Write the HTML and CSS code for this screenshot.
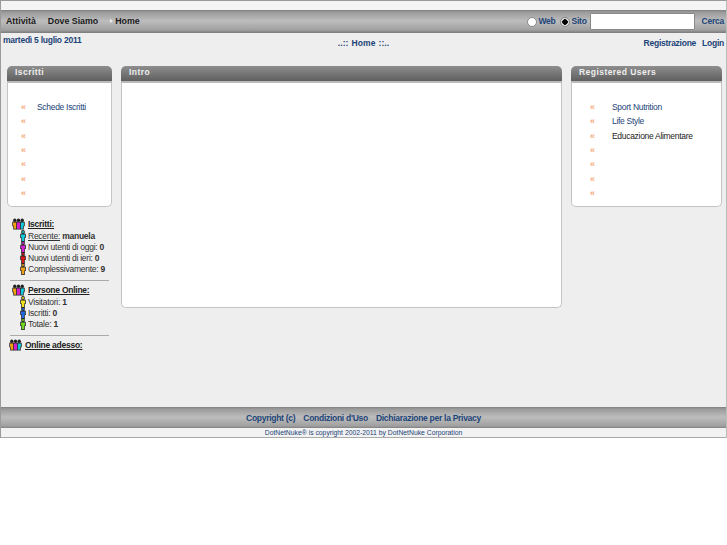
FILE: index.html
```html
<!DOCTYPE html>
<html lang="it">
<head>
<meta charset="utf-8">
<title>Home</title>
<link rel="stylesheet" href="styles.css">
</head>
<body>
<svg class="defs" width="0" height="0" aria-hidden="true">
  <symbol id="person" viewBox="0 0 6 12">
    <circle cx="3" cy="2" r="1.9" fill="#222"/>
    <path d="M.2 4.5Q.2 3.6 1.2 3.6H4.8Q5.8 3.6 5.8 4.5V8H4.8V12H1.2V8H.2Z" fill="#222"/>
    <circle cx="3" cy="2" r="1" fill="currentColor"/>
    <path d="M1 4.4H5V7.6H4.1V11.3H1.9V7.6H1Z" fill="currentColor"/>
  </symbol>
  <symbol id="group" viewBox="0 0 14 12">
    <g fill="#222">
      <circle cx="3" cy="2" r="1.8"/><circle cx="7" cy="2" r="1.8"/><circle cx="11" cy="2" r="1.8"/>
      <path d="M.3 4.2Q.3 3.4 1.3 3.4H12.7Q13.7 3.4 13.7 4.2V8.5H12.7V12H1.3V8.5H.3Z"/>
    </g>
    <path class="g1" d="M1.1 4.3H4.5V11.2H2V8H1.1Z"/>
    <path class="g2" d="M5.3 4.3H8.7V11.2H5.3Z"/>
    <path class="g3" d="M9.5 4.3H12.9V8H12V11.2H9.5Z"/>
  </symbol>
</svg>
<div class="page">
  <div class="topstrip"></div>
  <nav class="menubar">
    <div class="menu">
      <span class="menuitem">Attività</span>
      <span class="menuitem">Dove Siamo</span>
      <span class="menuitem current">Home</span>
    </div>
    <div class="search">
      <span class="radio"></span><span class="searchlabel">Web</span>
      <span class="radio checked"></span><span class="searchlabel">Sito</span>
      <span class="searchbox"></span>
      <span class="searchlabel cerca">Cerca</span>
    </div>
  </nav>
  <div class="infobar">
    <span class="date">martedì 5 luglio 2011</span>
    <span class="crumb">..:: Home ::..</span>
    <span class="login"><span>Registrazione</span><span>Login</span></span>
  </div>
  <main class="columns">
    <div class="leftcol">
      <section class="panel">
        <h2 class="panelhead">Iscritti</h2>
        <ul class="panelbody">
          <li><a>Schede Iscritti</a></li>
          <li></li><li></li><li></li><li></li><li></li><li></li>
        </ul>
      </section>
      <div class="stats">
        <div class="stathead"><svg class="gicon set1"><use href="#group"/></svg><span>Iscritti:</span></div>
        <div class="statrow"><svg class="picon c-cyan"><use href="#person"/></svg><span><u>Recente:</u> <b>manuela</b></span></div>
        <div class="statrow"><svg class="picon c-mag"><use href="#person"/></svg><span>Nuovi utenti di oggi: <b>0</b></span></div>
        <div class="statrow"><svg class="picon c-red"><use href="#person"/></svg><span>Nuovi utenti di ieri: <b>0</b></span></div>
        <div class="statrow"><svg class="picon c-org"><use href="#person"/></svg><span>Complessivamente: <b>9</b></span></div>
        <hr class="rule">
        <div class="stathead"><svg class="gicon set2"><use href="#group"/></svg><span>Persone Online:</span></div>
        <div class="statrow"><svg class="picon c-yel"><use href="#person"/></svg><span>Visitatori: <b>1</b></span></div>
        <div class="statrow"><svg class="picon c-blu"><use href="#person"/></svg><span>Iscritti: <b>0</b></span></div>
        <div class="statrow"><svg class="picon c-grn"><use href="#person"/></svg><span>Totale: <b>1</b></span></div>
        <hr class="rule">
        <div class="stathead outdent"><svg class="gicon set3"><use href="#group"/></svg><span>Online adesso:</span></div>
      </div>
    </div>
    <section class="panel centercol">
      <h2 class="panelhead">Intro</h2>
      <div class="panelbody tall"></div>
    </section>
    <section class="panel rightcol">
      <h2 class="panelhead">Registered Users</h2>
      <ul class="panelbody">
        <li><a>Sport Nutrition</a></li>
        <li><a>Life Style</a></li>
        <li>Educazione Alimentare</li>
        <li></li><li></li><li></li><li></li>
      </ul>
    </section>
  </main>
  <footer class="footbar">
    <span>Copyright (c)</span><span>Condizioni d'Uso</span><span>Dichiarazione per la Privacy</span>
  </footer>
  <div class="credit">DotNetNuke® is copyright 2002-2011 by DotNetNuke Corporation</div>
</div>
</body>
</html>
```
FILE: styles.css
```css
html, body { margin: 0; padding: 0; background: #fff; }
body { font-family: "Liberation Sans", Arial, sans-serif; font-size: 8.5px; letter-spacing: -.25px; color: #333; }
.defs { position: absolute; }
.page {
  width: 727px; height: 438px; box-sizing: border-box;
  background: #eeeeee;
  border-left: 1px solid #9a9a9a; border-top: 1px solid #9a9a9a;
  border-right: 1px solid #bbb;
  display: flex; flex-direction: column;
}
.topstrip { height: 9px; background: #f4f4f4; }
.menubar {
  height: 23px; display: flex; justify-content: space-between; align-items: center;
  background: linear-gradient(#7f7f7f 0, #9a9a9a 2px, #bdbdbd 11px, #a0a0a0 20px, #7a7a7a 23px);
}
.menu { display: flex; padding: 0 0 2px 5px; font-weight: bold; font-size: 8.8px; letter-spacing: 0; color: #1a1a1a; }
.menuitem { margin-right: 12px; }
.current { margin-left: 5px; position: relative; }
.current::before {
  content: ""; position: absolute; left: -5px; top: 3px;
  border-left: 3px solid #eee; border-top: 2px solid transparent; border-bottom: 2px solid transparent;
}
.search { display: flex; align-items: center; font-weight: bold; color: #1c4478; padding-right: 2px; }
.radio {
  width: 8px; height: 8px; border-radius: 50%; background: #fff; border: 1px solid #888; margin-right: 2px;
}
.radio.checked { background: radial-gradient(circle, #000 0 2.5px, #ddd 3px); }
.searchlabel { margin-right: 4px; padding-bottom: 2px; }
.searchbox { width: 103px; height: 15px; background: #fff; border: 1px solid #888; border-radius: 1px; margin-right: 7px; margin-left: -1px; }
.cerca { margin-right: 0; }
.infobar {
  height: 33px; display: grid; grid-template-columns: 1fr auto 1fr;
  font-weight: bold; color: #1c4478; padding: 2px 2px 0 2px; box-sizing: border-box;
}
.date { line-height: 10px; }
.crumb { padding-top: 3px; line-height: 10px; word-spacing: .5px; letter-spacing: .1px; }
.login { display: flex; justify-content: flex-end; gap: 6px; padding-top: 3px; line-height: 10px; }
.columns { flex: 1; display: flex; align-items: flex-start; padding: 0 5px 0 6px; }
.leftcol { width: 105px; margin-right: 9px; flex: none; }
.panel { flex: none; }
.centercol { width: 441px; margin-right: 9px; }
.rightcol { width: 151px; }
.panelhead {
  margin: 0; height: 15px; line-height: 13px; padding-left: 8px;
  font-size: 8.5px; font-weight: bold; letter-spacing: .45px; color: #eee;
  border-radius: 5px 5px 0 0;
  background: linear-gradient(#8e8e8e, #5f5f5f);
  border-bottom: 1px solid #bbb;
}
.panelbody {
  list-style: none; margin: 0; padding: 17px 0 7px 0; height: 125px; box-sizing: border-box;
  background: #fff; border: 1px solid #c4c4c4; border-top-color: #bbb; border-radius: 0 0 5px 5px;
}
.panelbody.tall { height: 226px; }
.panelbody li { height: 14.33px; line-height: 14px; padding-left: 29px; position: relative; color: #222; letter-spacing: -.3px; }
.panelbody li::before { content: "«"; position: absolute; left: 13px; color: #f0843c; font-size: 9px; letter-spacing: 0; }
.panelbody a { color: #1c4478; }
.rightcol .panelbody li { padding-left: 40px; }
.rightcol .panelbody li::before { left: 18px; }
.stats { padding: 11px 0 0 5px; }
.stathead { display: flex; align-items: center; height: 12px; font-weight: bold; text-decoration: underline; color: #222; }
.stathead span { margin-left: 3px; }
.outdent { margin-left: -3px; }
.gicon { width: 13px; height: 12px; flex: none; }
.picon { width: 6px; height: 12px; flex: none; margin: 0 2px 0 8px; }
.statrow { display: flex; align-items: center; height: 11.25px; white-space: nowrap; }
.rule { border: 0; border-top: 1px solid #aaa; margin: 5px 3px 3px -2px; }
.c-cyan { color: #13c8d8; } .c-mag { color: #d020d0; } .c-red { color: #d81818; }
.c-org { color: #f0a010; } .c-yel { color: #f0e020; } .c-blu { color: #2068e0; } .c-grn { color: #70d820; }
.g1 { fill: #f0a010; } .g2 { fill: #d020d0; } .g3 { fill: #13c8d8; }
.set2 .g1 { fill: #70d820; } .set2 .g2 { fill: #e02020; } .set2 .g3 { fill: #f0d020; }
.set3 .g1 { fill: #2068e0; } .set3 .g2 { fill: #f0d020; } .set3 .g3 { fill: #20a0e0; }
.footbar {
  height: 21px; flex: none; display: flex; justify-content: center; align-items: center; gap: 8px;
  font-weight: bold; color: #1c4478; letter-spacing: -.28px;
  background: linear-gradient(#7f7f7f 0, #9a9a9a 2px, #bdbdbd 10px, #a0a0a0 19px, #808080 21px);
}
.credit {
  height: 9px; flex: none; line-height: 9px; text-align: center; font-size: 6.8px; letter-spacing: 0; color: #1c4478;
  background: #f2f2f2; border-bottom: 1px solid #aaa;
}
```
